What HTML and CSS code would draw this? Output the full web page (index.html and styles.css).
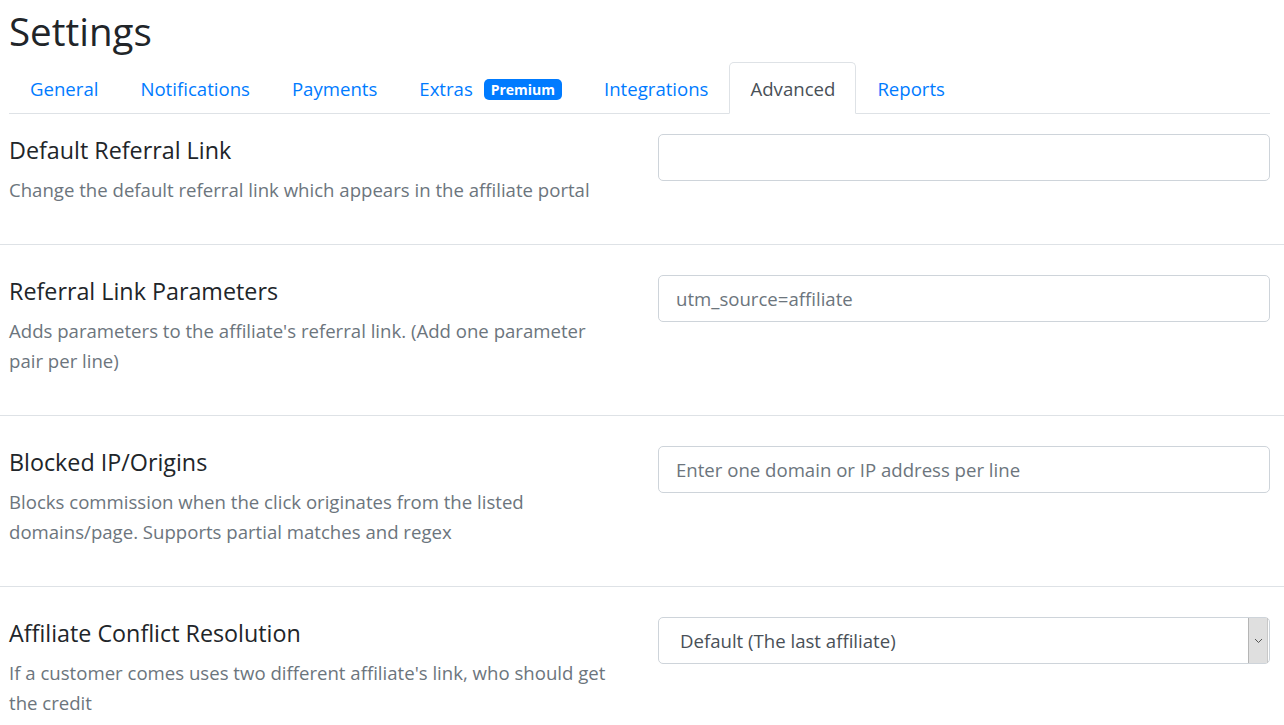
FILE: index.html
```html
<!DOCTYPE html>
<html lang="en">
<head>
<meta charset="utf-8">
<title>Settings</title>
<link rel="stylesheet" href="styles.css">
</head>
<body>
<div class="page">
  <header class="head">
    <h1 class="title">Settings</h1>
    <ul class="tabs">
      <li><a class="tab" href="#">General</a></li>
      <li><a class="tab" href="#">Notifications</a></li>
      <li><a class="tab" href="#">Payments</a></li>
      <li><a class="tab" href="#">Extras <span class="badge">Premium</span></a></li>
      <li><a class="tab" href="#">Integrations</a></li>
      <li><a class="tab active" href="#">Advanced</a></li>
      <li><a class="tab" href="#">Reports</a></li>
    </ul>
  </header>

  <section class="row">
    <div class="info">
      <h2 class="label">Default Referral Link</h2>
      <p class="desc">Change the default referral link which appears in the affiliate portal</p>
    </div>
    <div class="field"><input class="input" type="text"></div>
  </section>
  <hr class="sep">

  <section class="row">
    <div class="info">
      <h2 class="label">Referral Link Parameters</h2>
      <p class="desc">Adds parameters to the affiliate's referral link. (Add one parameter pair per line)</p>
    </div>
    <div class="field"><input class="input" type="text" placeholder="utm_source=affiliate"></div>
  </section>
  <hr class="sep">

  <section class="row">
    <div class="info">
      <h2 class="label">Blocked IP/Origins</h2>
      <p class="desc">Blocks commission when the click originates from the listed domains/page. Supports partial matches and regex</p>
    </div>
    <div class="field"><input class="input" type="text" placeholder="Enter one domain or IP address per line"></div>
  </section>
  <hr class="sep">

  <section class="row">
    <div class="info">
      <h2 class="label">Affiliate Conflict Resolution</h2>
      <p class="desc">If a customer comes uses two different affiliate's link, who should get the credit</p>
    </div>
    <div class="field">
      <div class="select-wrap">
        <select class="select">
          <option>Default (The last affiliate)</option>
          <option>The first affiliate</option>
        </select>
        <span class="arrow"><svg width="9" height="6" viewBox="0 0 9 6"><path d="M1 1l3.5 3.5L8 1" fill="none" stroke="#555" stroke-width="1"/></svg></span>
      </div>
    </div>
  </section>
</div>
</body>
</html>
```

FILE: styles.css
```css
* { box-sizing: border-box; }
html, body { margin: 0; padding: 0; background: #fff; }
body {
  font-family: "Open Sans", "Noto Sans", "Liberation Sans", sans-serif;
  color: #212529;
  font-size: 18.6px;
}
.page { padding-top: 7px; }
.head { padding: 0 14px 0 9px; }
.title {
  margin: 0 0 7px 0;
  font-size: 38.5px;
  font-weight: 400;
  line-height: 48px;
  color: #212529;
}
.tabs {
  list-style: none;
  margin: 0;
  padding: 0;
  display: flex;
  border-bottom: 1px solid #dee2e6;
}
.tabs li { margin-bottom: -1px; }
.tab {
  display: block;
  padding: 11px 20px 9px;
  line-height: 30px;
  font-size: 18.6px;
  border: 1px solid transparent;
  border-radius: 5px 5px 0 0;
  color: #007bff;
  text-decoration: none;
  white-space: nowrap;
}
.tab.active {
  color: #495057;
  background: #fff;
  border-color: #dee2e6 #dee2e6 #fff;
}
.badge {
  display: inline-block;
  margin-left: 6px;
  padding: 0 7px;
  background: #007bff;
  color: #fff;
  font-weight: 700;
  font-size: 14px;
  line-height: 21px;
  border-radius: 5px;
  vertical-align: 1px;
}
.row {
  display: grid;
  grid-template-columns: 1fr 1fr;
  column-gap: 37px;
  padding: 20px 14px 29px 9px;
}
.info { padding-top: 1px; }
.label {
  margin: 0;
  font-size: 23.3px;
  font-weight: 400;
  line-height: 30px;
  color: #212529;
}
.desc {
  margin: 10px 0 0 0;
  max-width: 614px;
  line-height: 30px;
  color: #6c757d;
}
.sep {
  margin: 10px 0;
  border: 0;
  border-top: 1px solid #dee2e6;
  height: 0;
}
.input, .select {
  display: block;
  width: 100%;
  height: 47px;
  padding: 0 17px;
  border: 1px solid #ced4da;
  border-radius: 5px;
  font: inherit;
  color: #495057;
  background: #fff;
}
.input::placeholder { color: #6c757d; opacity: 1; }
.select-wrap { position: relative; }
.select {
  appearance: none;
  -webkit-appearance: none;
  padding-left: 21px;
  color: #495057;
}
.arrow {
  position: absolute;
  top: 1px;
  right: 2px;
  bottom: 1px;
  width: 20px;
  background: #dfdfdf;
  border-left: 1px solid #b5b5b5;
  border-right: 1px solid #c8c8c8;
  display: flex;
  align-items: center;
  justify-content: center;
  pointer-events: none;
}
```
